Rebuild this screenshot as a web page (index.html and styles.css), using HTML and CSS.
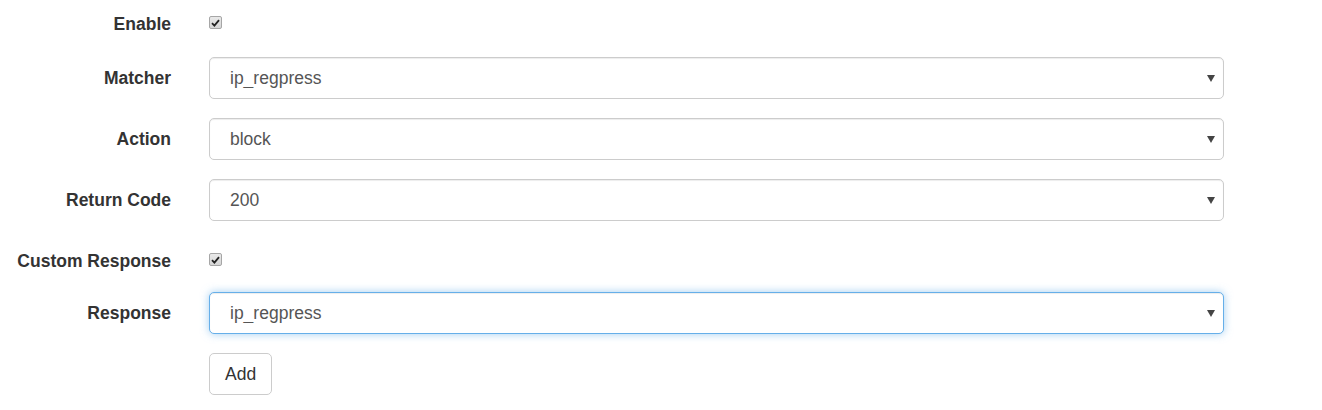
FILE: index.html
```html
<!DOCTYPE html>
<html>
<head>
<meta charset="utf-8">
<title>Rule</title>
<link rel="stylesheet" href="styles.css">
</head>
<body>
<form class="form">
  <div class="row row-check">
    <label class="label">Enable</label>
    <div class="field">
      <span class="cb"><svg width="9" height="8" viewBox="0 0 9 8"><path d="M1 4.2 L3.4 6.6 L8 1.2" fill="none" stroke="#222" stroke-width="1.8"/></svg></span>
    </div>
  </div>
  <div class="row">
    <label class="label">Matcher</label>
    <div class="field">
      <div class="select-wrap"><select class="select"><option>ip_regpress</option></select></div>
    </div>
  </div>
  <div class="row">
    <label class="label">Action</label>
    <div class="field">
      <div class="select-wrap"><select class="select"><option>block</option></select></div>
    </div>
  </div>
  <div class="row">
    <label class="label">Return Code</label>
    <div class="field">
      <div class="select-wrap"><select class="select"><option>200</option></select></div>
    </div>
  </div>
  <div class="row row-check row-check-2">
    <label class="label">Custom Response</label>
    <div class="field">
      <span class="cb"><svg width="9" height="8" viewBox="0 0 9 8"><path d="M1 4.2 L3.4 6.6 L8 1.2" fill="none" stroke="#222" stroke-width="1.8"/></svg></span>
    </div>
  </div>
  <div class="row">
    <label class="label">Response</label>
    <div class="field">
      <div class="select-wrap"><select class="select select-focus"><option>ip_regpress</option></select></div>
    </div>
  </div>
  <div class="row">
    <span class="label"></span>
    <div class="field">
      <button type="button" class="btn">Add</button>
    </div>
  </div>
</form>
</body>
</html>
```

FILE: styles.css
```css
html, body {
  margin: 0;
  padding: 0;
  background: #fff;
}
body {
  font-family: "Liberation Sans", Arial, sans-serif;
  font-size: 17.5px;
  line-height: 25px;
  color: #333;
}
.form {
  padding-top: 4px;
  display: flex;
  flex-direction: column;
}
.row {
  display: flex;
  align-items: flex-start;
  margin-bottom: 19px;
}
.row-check {
  height: 34px;
}
.row-check-2 {
  margin-top: 1px;
  height: 33px;
  margin-bottom: 18px;
}
.label {
  width: 171px;
  flex: none;
  text-align: right;
  font-weight: bold;
  color: #333;
  padding-top: 9px;
  line-height: 25px;
}
.row-check .label {
  padding-top: 8px;
}
.field {
  margin-left: 38px;
  width: 1015px;
}
.cb {
  display: flex;
  align-items: center;
  justify-content: center;
  width: 11px;
  height: 11px;
  margin-top: 12px;
  border: 1px solid #a6a6a6;
  border-radius: 2px;
  background: linear-gradient(#e9e9e9, #d6d6d6);
}
.cb svg {
  display: block;
}
.select-wrap {
  position: relative;
}
.select-wrap::after {
  content: "";
  position: absolute;
  right: 9px;
  top: 18px;
  border-left: 4px solid transparent;
  border-right: 4px solid transparent;
  border-top: 7px solid #444;
  pointer-events: none;
}
.select {
  -webkit-appearance: none;
  appearance: none;
  display: block;
  width: 1015px;
  height: 42px;
  margin: 0;
  padding: 0 15px 0 20px;
  font-family: "Liberation Sans", Arial, sans-serif;
  font-size: 17.5px;
  color: #555;
  background: #fff;
  border: 1px solid #ccc;
  border-radius: 5px;
  box-shadow: inset 0 1px 1px rgba(0, 0, 0, 0.075);
  outline: none;
}
.select-focus {
  border-color: #66afe9;
  box-shadow: inset 0 1px 1px rgba(0, 0, 0, 0.075), 0 0 8px rgba(102, 175, 233, 0.6);
}
.btn {
  display: block;
  height: 42px;
  margin: 0;
  padding: 0 15px;
  font-family: "Liberation Sans", Arial, sans-serif;
  font-size: 17.5px;
  line-height: 25px;
  color: #333;
  background: #fff;
  border: 1px solid #ccc;
  border-radius: 5px;
  cursor: pointer;
}
```
